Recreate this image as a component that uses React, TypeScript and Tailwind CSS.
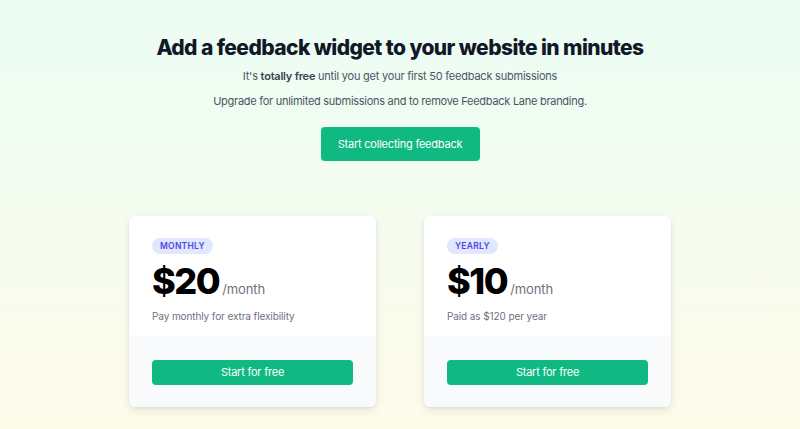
const plans = [
  {
    label: "Monthly",
    price: "$20",
    note: "Pay monthly for extra flexibility",
  },
  {
    label: "Yearly",
    price: "$10",
    note: "Paid as $120 per year",
  },
];

function PlanCard({ label, price, note }: { label: string; price: string; note: string }) {
  return (
    <div className="w-[247px] overflow-hidden rounded-md bg-white shadow-[0_4px_10px_rgba(0,0,0,0.08),0_1px_3px_rgba(0,0,0,0.06)]">
      <div className="px-[23px] pt-[22px] pb-[13px]">
        <div className="flex">
          <span className="flex h-4 items-center rounded-full bg-[#e0e7ff] px-[8px] text-[8.5px] font-semibold uppercase tracking-[0.03em] text-[#4f46e5]">
            {label}
          </span>
        </div>
        <div className="mt-[7px] flex items-baseline">
          <span className="text-[36px] font-extrabold leading-[40px] tracking-[-0.04em] text-black">{price}</span>
          <span className="ml-[3px] text-[13px] tracking-[-0.01em] text-[#6b7280]">/month</span>
        </div>
        <p className="mt-[8px] text-[10px] leading-[14px] tracking-[-0.01em] text-[#6b7280]">{note}</p>
      </div>
      <div className="bg-[#f9fafb] px-[23px] pt-[22px] pb-[22px]">
        <button className="h-[25px] w-full rounded-[4px] bg-[#10b981] text-[11px] tracking-[-0.02em] text-white">
          Start for free
        </button>
      </div>
    </div>
  );
}

export default function App() {
  return (
    <div
      className="flex h-[429px] w-full flex-col items-center overflow-hidden bg-gradient-to-b from-[#ebfdf4] to-[#fefbea] pt-[34px]"
      style={{ fontFamily: "Inter, 'Noto Sans', sans-serif" }}
    >
      <h1 className="text-[21px] font-extrabold leading-[28px] tracking-[-0.028em] text-[#111827]">
        Add a feedback widget to your website in minutes
      </h1>
      <p className="mt-[6px] text-[11px] leading-[16px] tracking-[-0.02em] text-[#4b5563]">
        It's <span className="font-semibold text-[#374151]">totally free</span> until you get your first 50 feedback submissions
      </p>
      <p className="mt-[9px] text-[11px] leading-[16px] tracking-[-0.025em] text-[#4b5563]">
        Upgrade for unlimited submissions and to remove Feedback Lane branding.
      </p>
      <button className="mt-[18px] h-[34px] w-[159px] rounded-[4px] bg-[#10b981] text-[11px] tracking-[-0.02em] text-white">
        Start collecting feedback
      </button>
      <div className="mt-[55px] flex gap-12">
        {plans.map((p) => (
          <PlanCard key={p.label} {...p} />
        ))}
      </div>
    </div>
  );
}
